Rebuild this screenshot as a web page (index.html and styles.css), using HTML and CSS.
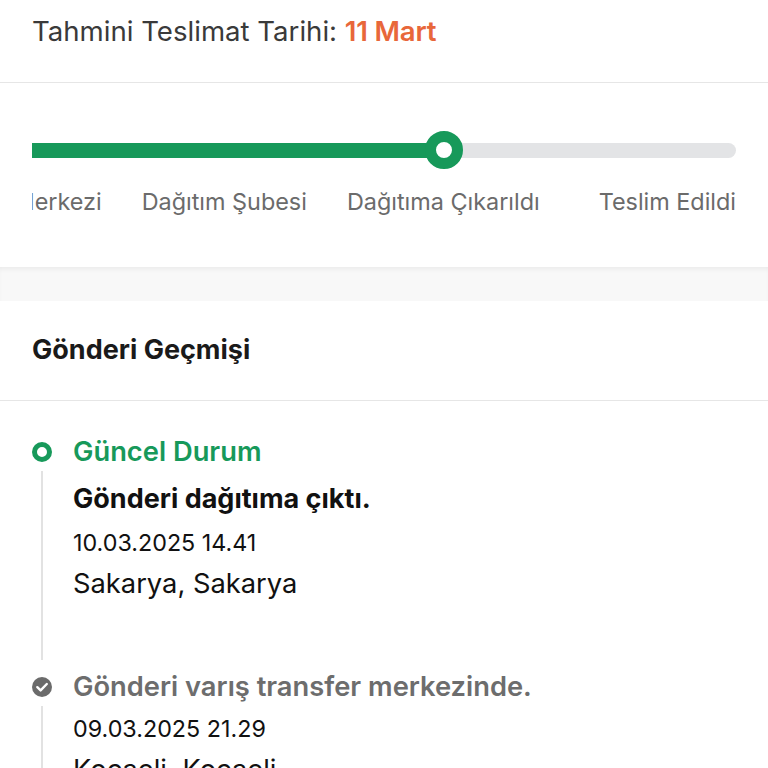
FILE: index.html
```html
<!DOCTYPE html>
<html lang="tr">
<head>
<meta charset="utf-8">
<link rel="stylesheet" href="styles.css">
</head>
<body>
<header class="eta">
  <span class="eta-label">Tahmini Teslimat Tarihi:</span>
  <span class="eta-date">11 Mart</span>
</header>

<section class="progress">
  <div class="bar">
    <div class="bar-fill"></div>
    <div class="bar-knob"></div>
    <div class="bar-rest"></div>
  </div>
  <div class="steps">
    <div class="steps-track">
      <span class="step">Transfer Merkezi</span>
      <span class="step">Dağıtım Şubesi</span>
      <span class="step">Dağıtıma Çıkarıldı</span>
      <span class="step step-last">Teslim Edildi</span>
    </div>
  </div>
</section>

<div class="band"></div>

<section class="history">
  <h2 class="history-title">Gönderi Geçmişi</h2>
  <ol class="timeline">
    <li class="event">
      <div class="rail">
        <svg class="dot" width="22" height="22" viewBox="0 0 22 22"><circle cx="11" cy="11" r="7.5" fill="none" stroke="#17995a" stroke-width="5"/></svg>
        <div class="line"></div>
      </div>
      <div class="event-body">
        <div class="event-status current">Güncel Durum</div>
        <div class="event-title">Gönderi dağıtıma çıktı.</div>
        <div class="event-date">10.03.2025 14.41</div>
        <div class="event-place">Sakarya, Sakarya</div>
      </div>
    </li>
    <li class="event">
      <div class="rail">
        <svg class="dot" width="22" height="22" viewBox="0 0 22 22"><circle cx="11" cy="11" r="10" fill="#6b6b6b"/><path d="M6.3 11.2 L9.6 14.4 L15.8 8" fill="none" stroke="#fff" stroke-width="2.4" stroke-linecap="round" stroke-linejoin="round"/></svg>
        <div class="line"></div>
      </div>
      <div class="event-body">
        <div class="event-status past">Gönderi varış transfer merkezinde.</div>
        <div class="event-date">09.03.2025 21.29</div>
        <div class="event-place">Kocaeli, Kocaeli</div>
      </div>
    </li>
  </ol>
</section>
</body>
</html>
```

FILE: styles.css
```css
* { box-sizing: border-box; }
html, body { margin: 0; padding: 0; background: #fff; }
body {
  font-family: Inter, "Noto Sans", "Liberation Sans", sans-serif;
  color: #111;
  overflow: hidden;
  height: 768px;
}

.eta {
  height: 83px;
  padding: 14px 32px 0;
  border-bottom: 1px solid #e6e6e6;
  font-size: 27.6px;
  line-height: 34px;
  color: #3a3a3a;
}
.eta-date { color: #e8673a; font-weight: 600; letter-spacing: -0.2px; }

.progress {
  height: 184px;
  padding: 48px 32px 0;
}
.bar {
  display: flex;
  align-items: center;
  height: 38px;
}
.bar-fill {
  width: 406px;
  height: 15px;
  background: #17995a;
  flex: none;
}
.bar-knob {
  width: 38px;
  height: 38px;
  border-radius: 50%;
  border: 11px solid #17995a;
  background: #fff;
  margin-left: -13px;
  margin-right: -13px;
  position: relative;
  z-index: 1;
  flex: none;
}
.bar-rest {
  flex: 1;
  height: 15px;
  background: #e3e4e6;
  border-radius: 0 8px 8px 0;
}
.steps {
  overflow: hidden;
  margin-top: 19px;
}
.steps-track {
  display: flex;
  justify-content: flex-end;
  white-space: nowrap;
  font-size: 23.4px;
  line-height: 28px;
  color: #6b6b6b;
  gap: 40px;
}
.step-last { margin-left: 19px; }

.band {
  height: 34px;
  background: #f8f8f8;
  box-shadow: inset 0 4px 5px -2px rgba(0,0,0,0.06);
}

.history-title {
  margin: 0;
  height: 100px;
  padding: 32px 32px 0;
  font-size: 27px;
  line-height: 34px;
  font-weight: 700;
  color: #1a1a1a;
  border-bottom: 1px solid #e6e6e6;
}

.timeline {
  list-style: none;
  margin: 0;
  padding: 35px 32px 0 31px;
}
.event {
  display: flex;
  gap: 20px;
}
.rail {
  width: 22px;
  display: flex;
  flex-direction: column;
  align-items: center;
  flex: none;
  padding-top: 5px;
}
.dot { flex: none; }
.line {
  width: 2px;
  flex: 1;
  background: #e2e2e2;
  margin-top: 8px;
  margin-bottom: 11px;
}
.event-body {
  padding-bottom: 71px;
}
.event-status {
  font-size: 27.3px;
  line-height: 32px;
  font-weight: 600;
}
.current { color: #17995a; }
.past { color: #6d6d6d; }
.event-title {
  margin-top: 15px;
  font-size: 27px;
  line-height: 32px;
  font-weight: 700;
  color: #111;
}
.event-date {
  margin-top: 13px;
  font-size: 23.3px;
  line-height: 30px;
  color: #111;
}
.event-place {
  margin-top: 10px;
  font-size: 27.3px;
  line-height: 32px;
  color: #111;
}
.past + .event-date { margin-top: 11px; }
```
